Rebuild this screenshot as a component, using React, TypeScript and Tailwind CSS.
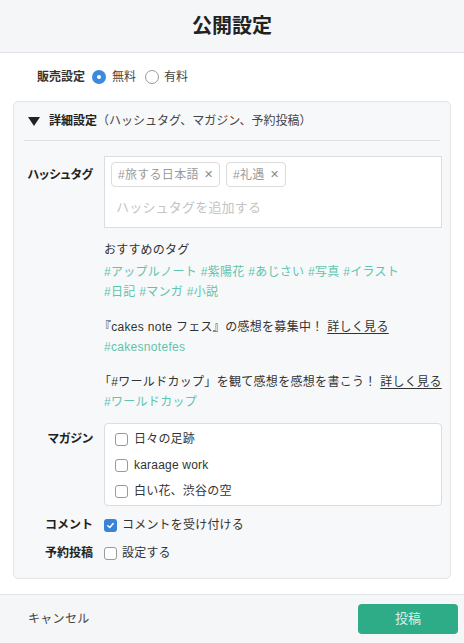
import React from "react";

const font = { fontFamily: '"Liberation Sans", "Noto Sans CJK JP", sans-serif' };

function Check({ checked = false }: { checked?: boolean }) {
  if (checked) {
    return (
      <span className="flex h-[13px] w-[13px] items-center justify-center rounded-[3px] bg-[#3a84d8]">
        <svg width="9" height="9" viewBox="0 0 10 10">
          <path d="M2 5.2 L4.2 7.3 L8 2.8" fill="none" stroke="white" strokeWidth="1.6" strokeLinecap="round" strokeLinejoin="round" />
        </svg>
      </span>
    );
  }
  return <span className="block h-[13px] w-[13px] rounded-[3px] border border-[#9a9a9a] bg-white" />;
}

function Radio({ checked = false }: { checked?: boolean }) {
  if (checked) {
    return (
      <span className="flex h-[14px] w-[14px] items-center justify-center rounded-full bg-[#3a8ae0]">
        <span className="block h-[4px] w-[4px] rounded-full bg-white" />
      </span>
    );
  }
  return <span className="block h-[14px] w-[14px] rounded-full border border-[#9a9a9a] bg-white" />;
}

function Tag({ label }: { label: string }) {
  return (
    <span className="flex h-[25px] items-center gap-[5px] rounded-[4px] border border-[#dcdcdc] bg-white px-[6px] text-[12px] tracking-[0.3px] text-[#9a9a9a]">
      {label}
      <span className="text-[11px] text-[#8a8a8a]">✕</span>
    </span>
  );
}

export default function App() {
  const teal = "text-[#5fc4ae] tracking-[0.3px]";
  return (
    <div style={font} className="flex h-[643px] w-[464px] flex-col bg-white text-[#333]">
      <div className="flex h-[53px] shrink-0 items-center justify-center border-b border-[#e2e3e6] bg-[#f5f6f8]">
        <span className="text-[20px] font-bold text-[#222]">公開設定</span>
      </div>

      <div className="flex h-[48px] items-center pl-[37px] text-[12px]">
        <span className="font-bold text-[#333]">販売設定</span>
        <span className="ml-[7px]"><Radio checked /></span>
        <span className="ml-[6px] text-[#444]">無料</span>
        <span className="ml-[9px]"><Radio /></span>
        <span className="ml-[5px] text-[#444]">有料</span>
      </div>

      <div className="mx-[13px] rounded-[5px] border border-[#e3e4e6] bg-[#f7f8fa] pb-[11px]">
        <div className="flex h-[38px] items-center pl-[14px] text-[12px]">
          <svg width="12" height="9" viewBox="0 0 12 9" className="mt-[1px]">
            <path d="M0 0 H12 L6 9 Z" fill="#222" />
          </svg>
          <span className="ml-[9px] font-bold text-[#222]">詳細設定</span>
          <span className="text-[#444]">（ハッシュタグ、マガジン、予約投稿）</span>
        </div>
        <div className="mx-[10px] border-t border-[#dfe0e3]" />

        <div className="mt-[15px] flex">
          <div className="w-[80px] pt-[10px] pr-[1px] text-right text-[12px] font-bold text-[#222] [font-feature-settings:'palt']">ハッシュタグ</div>
          <div className="ml-[10px] w-[338px]">
            <div className="h-[72px] border border-[#dcdde0] bg-white px-[6px] pt-[5px]">
              <div className="flex gap-[6px]">
                <Tag label="#旅する日本語" />
                <Tag label="#礼遇" />
              </div>
              <div className="mt-[11px] pl-[5px] text-[13px] tracking-[0.2px] text-[#c4c4c4]">ハッシュタグを追加する</div>
            </div>

            <div className="mt-[12px] text-[12px] leading-[20px]">
              <div className="mb-[2px] tracking-[0.2px] text-[#333]">おすすめのタグ</div>
              <div className={teal}>#アップルノート #紫陽花 #あじさい #写真 #イラスト</div>
              <div className={teal}>#日記 #マンガ #小説</div>

              <div className="mt-[15px] -ml-[5px] tracking-[0.3px] text-[#333]">
                『cakes note フェス』の感想を募集中！ <span className="underline underline-offset-2">詳しく見る</span>
              </div>
              <div className={teal}>#cakesnotefes</div>

              <div className="mt-[15px] -ml-[5px] tracking-[0.3px] text-[#333]">
                「#ワールドカップ」を観て感想を感想を書こう！ <span className="underline underline-offset-2">詳しく見る</span>
              </div>
              <div className={teal}>#ワールドカップ</div>
            </div>
          </div>
        </div>

        <div className="mt-[11px] flex">
          <div className="w-[80px] pt-[7px] pr-[1px] text-right text-[12px] font-bold text-[#222] [font-feature-settings:'palt']">マガジン</div>
          <div className="ml-[10px] w-[338px] rounded-[4px] border border-[#dcdde0] bg-white px-[10px] pt-[2px] pb-[1px] text-[12px] tracking-[0.2px] text-[#333]">
            {["日々の足跡", "karaage work", "白い花、渋谷の空"].map((m) => (
              <div key={m} className="flex h-[26px] items-center gap-[6px]">
                <Check />
                <span>{m}</span>
              </div>
            ))}
          </div>
        </div>

        <div className="mt-[5px] flex h-[28px] items-center text-[12px]">
          <div className="w-[80px] pr-[1px] text-right font-bold text-[#222]">コメント</div>
          <div className="ml-[10px] flex items-center gap-[5px] tracking-[0.2px] text-[#333]">
            <Check checked />
            <span>コメントを受け付ける</span>
          </div>
        </div>
        <div className="flex h-[28px] items-center text-[12px]">
          <div className="w-[80px] pr-[1px] text-right font-bold text-[#222]">予約投稿</div>
          <div className="ml-[10px] flex items-center gap-[5px] tracking-[0.2px] text-[#333]">
            <Check />
            <span>設定する</span>
          </div>
        </div>
      </div>

      <div className="mt-[15px] flex flex-1 items-center justify-between border-t border-[#e2e3e6] bg-[#f5f6f8] pl-[28px] pr-[6px]">
        <span className="text-[12px] tracking-[0.3px] text-[#444]">キャンセル</span>
        <button className="flex h-[30px] w-[100px] items-center justify-center rounded-[4px] bg-[#2eab87] text-[13px] text-[#d9f1ea]">
          投稿
        </button>
      </div>
    </div>
  );
}
